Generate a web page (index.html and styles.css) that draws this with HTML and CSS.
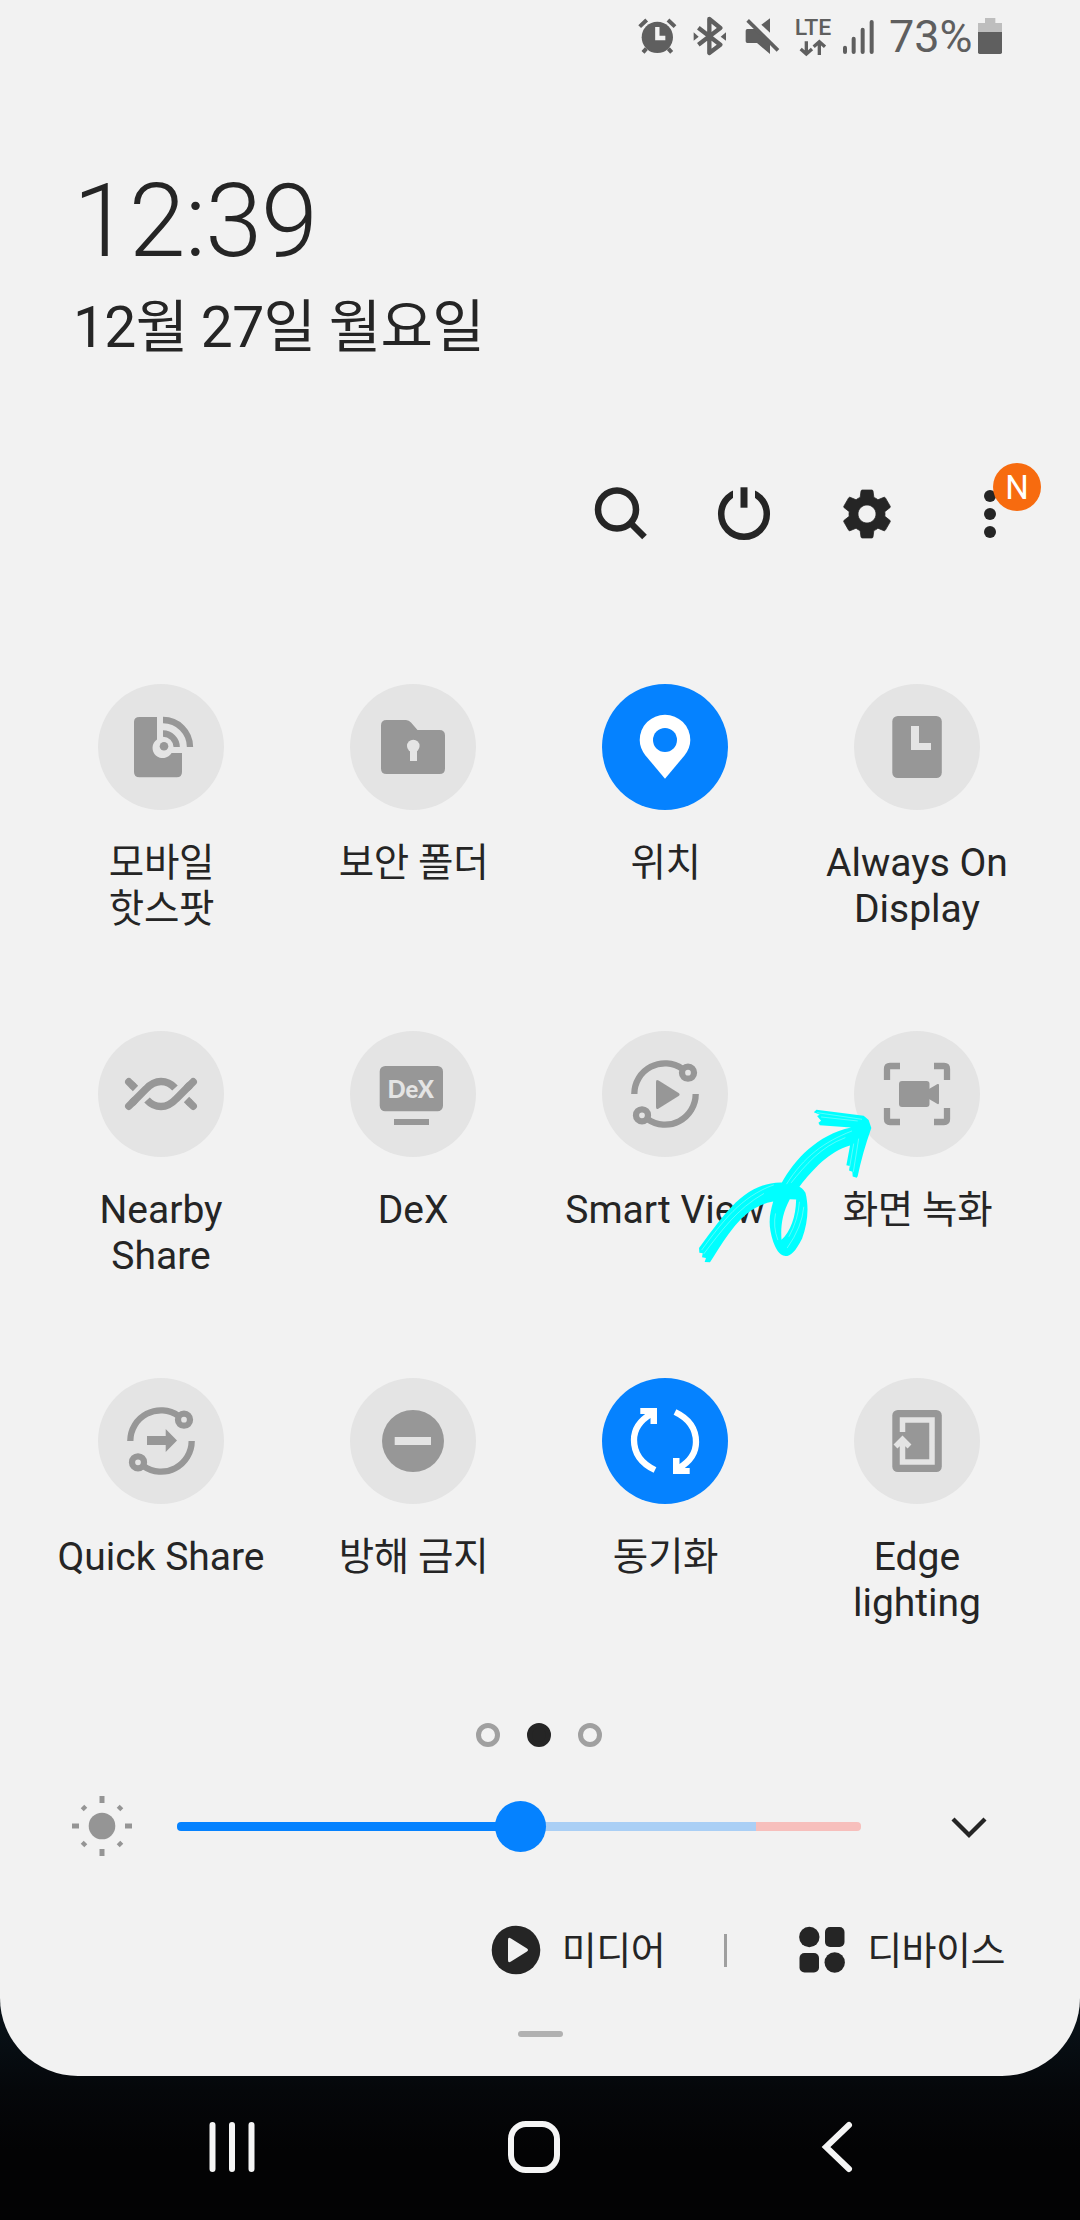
FILE: index.html
```html
<!DOCTYPE html>
<html lang="ko">
<head>
    <meta charset="UTF-8">
    <meta name="viewport" content="width=device-width, initial-scale=1.0">
    <title>Quick Settings</title>
    <link rel="stylesheet" href="styles.css">
</head>
<body>

    <div class="sheet">
        <!-- Status bar -->
        <div class="status">
            <svg width="40" height="40" viewBox="50 48 120 120">
                <path d="M58 80l21-20M164 80l-21-20" stroke="#5f5f5f" stroke-width="12"/>
                <path d="M78 146l-10 11M144 146l10 11" stroke="#5f5f5f" stroke-width="12"/>
                <circle cx="111" cy="112" r="47" fill="#5f5f5f"/>
                <path d="M111 81v33h24" fill="none" stroke="#f2f2f2" stroke-width="13"/>
            </svg>
            <svg width="40" height="40" viewBox="206 48 120 120">
                <path d="M234 83l66 51-33 25V57l33 27-66 50" fill="none" stroke="#5f5f5f" stroke-width="13" stroke-linejoin="round"/>
                <path d="M220 97v25l15-12zM317 97v25l-16-12z" fill="#5f5f5f"/>
            </svg>
            <svg width="40" height="40" viewBox="362 48 120 120">
                <path d="M381 87h25l43 43v32l-39-33h-29q-5 0-5-5V92q0-5 5-5zM449 55v43l-26-24z" fill="#5f5f5f"/>
                <path d="M382 61l91 90" stroke="#5f5f5f" stroke-width="11"/>
            </svg>
            <svg width="36" height="40" viewBox="518 48 108 120" class="lte">
                <text x="523" y="105" textLength="110" lengthAdjust="spacingAndGlyphs">LTE</text>
                <path d="M558 124v36M541 147l17 15 17-15M597 165v-38M580 140l17-15 17 15" fill="none" stroke="#5f5f5f" stroke-width="10"/>
            </svg>
            <svg width="36" height="40" viewBox="662 48 108 120">
                <path d="M674 143v13M700 116v40M727 89v67M754 66v90" stroke="#5f5f5f" stroke-width="12" stroke-linecap="round"/>
            </svg>
            <div class="battery">
                <span>73%</span>
                <svg width="28" height="40" viewBox="1068 48 84 120">
                    <path d="M1095 54h31v15h20v28h-72V69h21z" fill="#bebebe"/>
                    <path d="M1074 96h72v61q0 5-5 5h-62q-5 0-5-5z" fill="#5f5f5f"/>
                </svg>
            </div>
        </div>

        <!-- Clock -->
        <div class="clock">
            <div class="time">12:39</div>
            <div class="date">12월 27일 월요일</div>
        </div>

        <!-- Toolbar -->
        <div class="toolbar">
            <svg width="60" height="60" viewBox="0 0 60 60">
                <circle cx="26" cy="25.5" r="19" fill="none" stroke="#252525" stroke-width="6.5"/>
                <path d="M39 38.5l14.500 14.500" stroke="#252525" stroke-width="6.5"/>
            </svg>
            <svg width="60" height="60" viewBox="0 0 60 60">
                <circle cx="30" cy="30" r="22.8" fill="none" stroke="#252525" stroke-width="6.5"/>
                <path d="M19 0h22v18H19z" fill="#f2f2f2"/>
                <path d="M30 3.300v20.400" stroke="#252525" stroke-width="7"/>
            </svg>
            <svg width="60" height="60" viewBox="0 0 24 24">
                <path fill="#252525" stroke="#252525" stroke-width=".3" d="M19.140 12.940c.04-.3.06-.61.06-.94 0-.32-.02-.64-.07-.94l2.030-1.580c.18-.14.23-.41.12-.61l-1.920-3.320c-.12-.22-.37-.29-.59-.22l-2.390.96c-.5-.38-1.030-.7-1.620-.94l-.36-2.540c-.04-.24-.24-.41-.48-.41h-3.840c-.24 0-.43.17-.47.41l-.36 2.540c-.59.24-1.130.57-1.620.94l-2.390-.96c-.22-.08-.47 0-.59.22L2.740 8.870c-.12.21-.08.47.12.61l2.030 1.580c-.05.3-.09.63-.09.94s.02.64.07.94l-2.030 1.580c-.18.14-.23.41-.12.61l1.920 3.320c.12.22.37.29.59.22l2.390-.96c.5.38 1.030.7 1.620.94l.36 2.540c.05.24.24.41.48.41h3.840c.24 0 .44-.17.47-.41l.36-2.540c.59-.24 1.130-.56 1.620-.94l2.390.96c.22.08.47 0 .59-.22l1.920-3.320c.12-.22.07-.47-.12-.61l-2.010-1.580zM12 15.600c-1.980 0-3.600-1.620-3.600-3.600s1.620-3.600 3.600-3.600 3.600 1.620 3.600 3.600-1.620 3.600-3.600 3.600z"/>
            </svg>
            <div class="more">
                <svg width="60" height="60" viewBox="0 0 60 60" fill="#252525">
                    <circle cx="30" cy="12" r="6"/>
                    <circle cx="30" cy="30" r="6"/>
                    <circle cx="30" cy="48" r="6"/>
                </svg>
                <span class="badge">N</span>
            </div>
        </div>

        <!-- Quick setting tiles -->
        <div class="tiles">
            <div class="tile">
                <svg class="icon" viewBox="0 0 126 126">
                    <path d="M41.500 33H59v22.500A10.200 10.200 0 1 0 73.600 69H84v19q0 5.300-5.300 5.300H41.500q-5.500 0-5.500-5.300V38q0-5 5.500-5z"/>
                    <circle cx="66" cy="62.3" r="4.3"/>
                    <path class="line" d="M65 36a27 27 0 0 1 27 27M65 49.500a13.700 13.700 0 0 1 13.700 13.500"/>
                </svg>
                <span class="ko">모바일<br>핫스팟</span>
            </div>
            <div class="tile">
                <svg class="icon" viewBox="0 0 126 126">
                    <path d="M36.500 36H56q3 0 5 2.500l6.500 7.500h22q5.500 0 5.500 5.500v33q0 5.500-5.500 5.500h-53q-5.500 0-5.500-5.500v-43q0-5.500 5.500-5.500z"/>
                    <circle class="cut" cx="63.3" cy="62" r="6.3"/>
                    <path class="cut" d="M60 64h7v13h-7z"/>
                </svg>
                <span class="ko">보안 폴더</span>
            </div>
            <div class="tile on">
                <svg class="icon" viewBox="0 0 126 126">
                    <path d="M63 94.700L43.500 71.500Q37.700 64 37.700 56a25.300 25.300 0 0 1 50.600 0q0 8-5.800 15.500z"/>
                    <circle class="cut" cx="63" cy="56" r="12"/>
                </svg>
                <span class="ko">위치</span>
            </div>
            <div class="tile">
                <svg class="icon" viewBox="0 0 126 126">
                    <rect x="38.3" y="32" width="49.5" height="62" rx="5.5"/>
                    <path class="cut" d="M57 42h8v17h12v7H57z"/>
                </svg>
                <span>Always On<br>Display</span>
            </div>

            <div class="tile">
                <svg class="icon" viewBox="0 0 126 126">
                    <g class="line wave">
                        <path d="M34 54l3.500 3.500M92 72l-3.500-3.500"/>
                        <path d="M34 72L48 58Q55 50.500 63 50.500T77 57"/>
                        <path d="M92 54L78 68Q71 75.500 63 75.500T49 69"/>
                    </g>
                    <g class="line wave round">
                        <path d="M30.800 50.800L34 54M30.800 75.200L36 70M95.200 50.800L90 56M95.200 75.200L92 72"/>
                    </g>
                </svg>
                <span>Nearby<br>Share</span>
            </div>
            <div class="tile">
                <svg class="icon" viewBox="0 0 126 126">
                    <rect x="29.7" y="35" width="63.3" height="45.3" rx="5.5"/>
                    <path d="M44 88h35v6H44z"/>
                    <text class="cut dex" x="37.5" y="67" textLength="46.5" lengthAdjust="spacingAndGlyphs">DeX</text>
                </svg>
                <span>DeX</span>
            </div>
            <div class="tile">
                <svg class="icon" viewBox="0 0 126 126">
                    <path class="line" d="M32.300 63A30.700 30.700 0 0 1 80.500 37.800M93.700 63A30.700 30.700 0 0 1 45.500 88.200"/>
                    <circle class="line" cx="86" cy="41.7" r="6"/>
                    <circle class="line" cx="40" cy="84.3" r="6"/>
                    <path d="M54 51q0-3 2.600-1.500l20 12.500q2 1.500 0 3l-20 12.500q-2.600 1.500-2.600-1.500z"/>
                </svg>
                <span>Smart View</span>
            </div>
            <div class="tile">
                <svg class="icon" viewBox="0 0 126 126">
                    <path class="line" d="M33 49V38q0-3 3-3h10M80 35h10q3 0 3 3v11M93 77v11q0 3-3 3H80M46 91H36q-3 0-3-3V77"/>
                    <rect x="45" y="50" width="30.5" height="26" rx="3"/>
                    <path d="M75 58l8.500-5q1.500-.5 1.500 1v18q0 1.500-1.500 1L75 68z"/>
                </svg>
                <span class="ko">화면 녹화</span>
            </div>

            <div class="tile">
                <svg class="icon" viewBox="0 0 126 126">
                    <path class="line" d="M32.300 63A30.700 30.700 0 0 1 80.500 37.800M93.700 63A30.700 30.700 0 0 1 45.500 88.200"/>
                    <circle class="line" cx="86" cy="41.7" r="6"/>
                    <circle class="line" cx="40" cy="84.3" r="6"/>
                    <path d="M49 58h18.700v-7L79 62.500 67.700 74v-7H49z"/>
                </svg>
                <span>Quick Share</span>
            </div>
            <div class="tile">
                <svg class="icon" viewBox="0 0 126 126">
                    <circle cx="63" cy="63" r="31"/>
                    <path class="cut" d="M44.700 59H81v8H44.700z"/>
                </svg>
                <span class="ko">방해 금지</span>
            </div>
            <div class="tile on">
                <svg class="icon" viewBox="0 0 126 126">
                    <path class="line" d="M53 92Q32 82 32 62 32 46 49 36M73 34Q94 44 94 64 94 80 77 90"/>
                    <path d="M38.300 30H55v16h-6.500v-6l-5-4h-5.200zM87.700 96H71V80h6.500v6l5 4h5.200z"/>
                </svg>
                <span class="ko">동기화</span>
            </div>
            <div class="tile">
                <svg class="icon" viewBox="0 0 126 126">
                    <rect x="38.3" y="32" width="49.5" height="62" rx="5.5"/>
                    <path class="edge" d="M48.500 54V42H78v42H48.500V61M41.500 68.500l7-7 7 7"/>
                </svg>
                <span>Edge<br>lighting</span>
            </div>
        </div>

        <div class="pages">
            <i></i>
            <i class="current"></i>
            <i></i>
        </div>

        <!-- Brightness -->
        <div class="brightness">
            <svg width="60" height="60" viewBox="0 0 60 60" fill="#959595">
                <circle cx="30" cy="30" r="13.3"/>
                <path d="M30 0v7M30 53v7M0 30h7M53 30h7M10.500 10.500l3 3M46.500 46.500l3 3M49.500 10.500l-3 3M13.500 46.500l-3 3" stroke="#959595" stroke-width="5"/>
            </svg>
            <div class="slider">
                <div class="level"></div>
                <div class="rest"></div>
                <div class="high"></div>
                <div class="thumb"></div>
            </div>
            <svg width="60" height="60" viewBox="0 0 60 60">
                <path d="M14 23l16 16 16-16" fill="none" stroke="#252525" stroke-width="4.3"/>
            </svg>
        </div>

        <!-- Media and devices -->
        <div class="panels">
            <div class="panel">
                <svg width="50" height="50" viewBox="0 0 50 50">
                    <circle cx="25" cy="25" r="24.3" fill="#252525"/>
                    <path d="M17 15q0-3.500 3-1.500l16 10q2 1.500 0 3l-16 10q-3 2-3-1.500z" fill="#f2f2f2"/>
                </svg>
                <span>미디어</span>
            </div>
            <div class="divider"></div>
            <div class="panel">
                <svg width="50" height="50" viewBox="0 0 50 50" fill="#252525">
                    <circle cx="12.3" cy="12" r="10.2"/>
                    <rect x="28" y="2" width="19.5" height="20" rx="5"/>
                    <rect x="2.5" y="28" width="19.5" height="19.5" rx="5"/>
                    <circle cx="37.7" cy="37.5" r="10.2"/>
                </svg>
                <span>디바이스</span>
            </div>
        </div>

        <div class="handle"></div>
    </div>

    <!-- Navigation bar -->
    <div class="nav">
        <svg width="60" height="60" viewBox="0 0 60 60">
            <path d="M10.500 8v44M30 8v44M49.500 8v44" stroke="#f5f5f5" stroke-width="6" stroke-linecap="round"/>
        </svg>
        <svg width="60" height="60" viewBox="0 0 60 60">
            <rect x="7" y="7" width="46" height="46" rx="15" fill="none" stroke="#f5f5f5" stroke-width="6"/>
        </svg>
        <svg width="60" height="60" viewBox="0 0 60 60">
            <path d="M43 8L20 30l23 22" fill="none" stroke="#f5f5f5" stroke-width="6" stroke-linecap="round"/>
        </svg>
    </div>

    <!-- Brush arrow pointing at the screen recorder tile -->
    <svg class="arrow" viewBox="470 290 530 475">
        <g fill="#00ffff">
            <path d="M475 714C540 630 605 518 720 517Q780 518 795 548C806 590 802 640 785 685 765 725 750 738 735 738 715 736 706 715 698 695 680 640 688 610 698 574 610 590 570 660 508 757l-16-1 4-12-12-2 2-12-10-2zM748 567C725 610 720 650 723 689 750 665 766 620 767 568z" fill-rule="evenodd"/>
            <path d="M722 521C765 445 830 375 932 352L838 345l-4-8 8-6-12-14 8-4-18-7 8-8 142 18 15 13 8 24C975 405 962 450 952 498l-3 5-12-4-1-14-10-4 2-14-10-2 11-59C865 425 820 475 778 528l-20 20z"/>
        </g>
        <g class="streaks">
            <path d="M483 720C545 635 600 560 700 524M489 732C540 665 590 595 670 550"/>
            <path d="M738 522C790 440 850 395 935 362M752 518C795 465 840 410 915 382"/>
            <path d="M830 307l135 20M842 320l110 12M940 400l-12 70M955 385l-16 100"/>
            <path d="M705 610Q697 650 712 690M790 590Q785 650 740 714M745 680Q773 630 777 575"/>
        </g>
    </svg>

</body>
</html>
```

FILE: styles.css
```css
* {
    box-sizing: border-box;
}

body {
    margin: 0;
    width: 1080px;
    height: 2220px;
    position: relative;
    font-family: Roboto, "Noto Sans CJK KR", sans-serif;
    color: #252525;
    background: linear-gradient(#081016 0, #081016 2030px, #05070a 2090px, #030304 2150px, #030304 100%);
}

svg {
    display: block;
    flex: none;
}

.sheet {
    height: 2076px;
    background: #f2f2f2;
    border-radius: 0 0 78px 78px;
}

/* status bar */
.status {
    display: flex;
    justify-content: flex-end;
    align-items: center;
    gap: 12px;
    height: 72px;
    padding-right: 76px;
    color: #5f5f5f;
}

.lte {
    overflow: visible;
    font-size: 66px;
    font-weight: 500;
    fill: #5f5f5f;
}

.battery {
    display: flex;
    align-items: center;
    justify-content: space-between;
    width: 115px;
    font-size: 45px;
    line-height: 54px;
}

.battery span {
    padding-top: 2px;
}

/* clock */
.clock {
    padding: 97px 0 0 73px;
}

.time {
    font-size: 102.5px;
    font-weight: 300;
    line-height: 105px;
    letter-spacing: -1px;
}

.date {
    margin-top: 20px;
    font-size: 57px;
    line-height: 68px;
    letter-spacing: -0.7px;
}

/* toolbar */
.toolbar {
    display: flex;
    justify-content: flex-end;
    gap: 63px;
    padding: 122px 60px 0 0;
}

.more {
    position: relative;
}

.badge {
    position: absolute;
    left: 33px;
    top: -21px;
    width: 48px;
    height: 48px;
    border-radius: 50%;
    background: #f76b0f;
    color: #fff;
    font-size: 33px;
    line-height: 50px;
    text-align: center;
}

/* tiles */
.tiles {
    display: grid;
    grid-template-columns: repeat(4, 252px);
    grid-auto-rows: 302px;
    row-gap: 45px;
    padding: 140px 0 0 35px;
}

.tile {
    display: flex;
    flex-direction: column;
    align-items: center;
    gap: 30px;
    font-size: 39px;
    line-height: 46px;
    text-align: center;
    white-space: nowrap;
}

.ko {
    padding-left: 1px;
    font-size: 38.5px;
    letter-spacing: -0.3px;
}

.icon {
    width: 126px;
    height: 126px;
    border-radius: 50%;
    background: #e4e4e4;
    fill: #979797;
    stroke: none;
}

.icon .line {
    fill: none;
    stroke: #979797;
    stroke-width: 6.3;
}

.icon .wave {
    stroke-width: 7.5;
}

.icon .round {
    stroke-linecap: round;
}

.icon .cut {
    fill: #e4e4e4;
}

.icon .edge {
    fill: none;
    stroke: #e4e4e4;
    stroke-width: 5.5;
}

.icon .dex {
    font-family: Lato, sans-serif;
    font-size: 24.5px;
    font-weight: 900;
}

.on .icon {
    background: #0582ff;
    fill: #fff;
}

.on .line {
    stroke: #fff;
}

.on .cut {
    fill: #0582ff;
}

.pages {
    display: flex;
    justify-content: center;
    gap: 27px;
    padding-right: 2px;
    margin-top: 43px;
}

.pages i {
    width: 24px;
    height: 24px;
    border: 5px solid #a0a0a0;
    border-radius: 50%;
}

.pages .current {
    border-color: #252525;
    background: #252525;
}

/* brightness */
.brightness {
    display: flex;
    align-items: center;
    margin-top: 49px;
    padding-left: 72px;
}

.slider {
    position: relative;
    display: flex;
    width: 684px;
    height: 9px;
    margin: 0 78px 0 45px;
}

.level {
    width: 343px;
    background: #0582ff;
    border-radius: 4px 0 0 4px;
}

.rest {
    width: 236px;
    background: #aacff5;
}

.high {
    flex: 1;
    background: #f7bfbc;
    border-radius: 0 4px 4px 0;
}

.thumb {
    position: absolute;
    left: 318px;
    top: -21px;
    width: 51px;
    height: 51px;
    border-radius: 50%;
    background: #0582ff;
}

/* media and devices */
.panels {
    display: flex;
    justify-content: flex-end;
    align-items: center;
    margin-top: 69px;
    padding-right: 75px;
    font-size: 38px;
    line-height: 52px;
    letter-spacing: -0.5px;
}

.panel {
    display: flex;
    gap: 20.5px;
    height: 50px;
}

.divider {
    width: 3px;
    height: 33px;
    margin: 0 70px 0 58.5px;
    background: #9f9f9f;
}

.handle {
    width: 45px;
    height: 6px;
    margin: 56px auto 0;
    border-radius: 3px;
    background: #b1b1b1;
}

/* navigation */
.nav {
    display: flex;
    justify-content: center;
    align-items: center;
    gap: 242px;
    height: 144px;
    padding: 0 12px 2px 0;
}

.arrow {
    position: absolute;
    left: 697px;
    top: 1107px;
    width: 177px;
    height: 158px;
}

.streaks {
    fill: none;
    stroke: #b5f8f9;
    stroke-width: 1.5;
}
```
